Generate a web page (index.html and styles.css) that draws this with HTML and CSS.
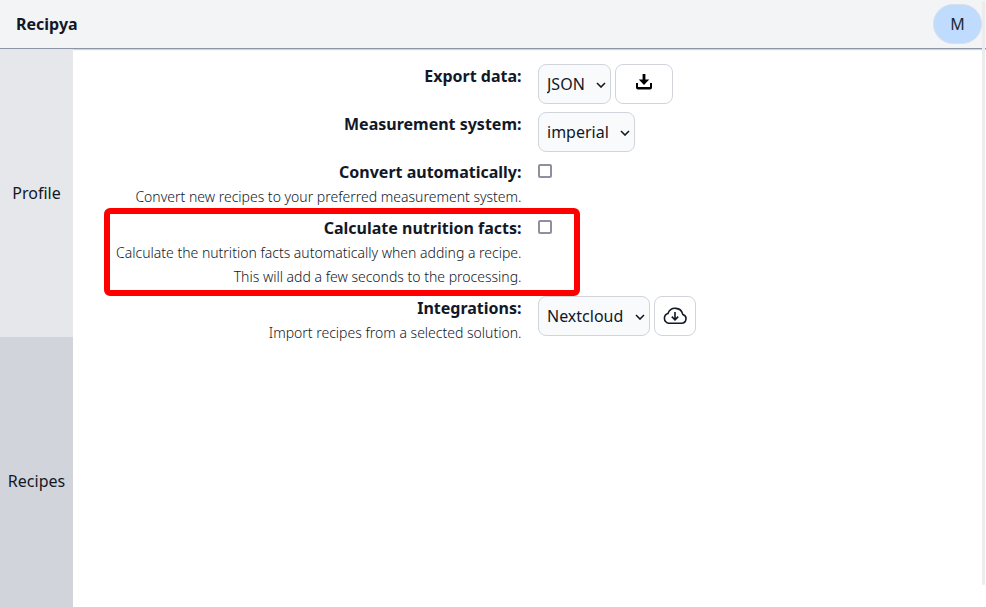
FILE: index.html
```html
<!DOCTYPE html>
<html lang="en">
<head>
<meta charset="utf-8">
<title>Recipya</title>
<link rel="stylesheet" href="styles.css">
</head>
<body>
<header class="topbar"><a class="brand">Recipya</a><button class="avatar">M</button></header>
<div class="shell">
  <nav class="tabs"><a class="tab">Profile</a><a class="tab selected">Recipes</a></nav>
  <main class="settings">
    <div class="row export">
      <div class="label"><b>Export data:</b></div>
      <div class="controls">
        <div class="select w-json"><select><option>JSON</option></select><svg class="chevron" viewBox="0 0 10 6"><path d="M1 1l4 4 4-4"/></svg></div>
        <button class="button wide" aria-label="Export"><svg class="download" viewBox="0 0 16 16"><path d="M6.6 0h2.8v5.5h3.8L8 11 2.800 5.500h3.800zM0 9h2v4h12V9h2v4.500q0 1.900-2 1.900H2q-2 0-2-1.900z"/></svg></button>
      </div>
    </div>
    <div class="row measure">
      <div class="label"><b>Measurement system:</b></div>
      <div class="controls"><div class="select w-imperial"><select><option>imperial</option></select><svg class="chevron" viewBox="0 0 10 6"><path d="M1 1l4 4 4-4"/></svg></div></div>
    </div>
    <div class="row convert">
      <div class="label"><b>Convert automatically:</b><small>Convert new recipes to your preferred measurement system.</small></div>
      <div class="controls"><input class="check" type="checkbox"></div>
    </div>
    <div class="row nutrition">
      <div class="label"><b>Calculate nutrition facts:</b><small>Calculate the nutrition facts automatically when adding a recipe.</small><small>This will add a few seconds to the processing.</small></div>
      <div class="controls"><input class="check" type="checkbox"></div>
      <svg class="highlight" viewBox="0 0 476 88"><rect x="3" y="3" width="470" height="82" rx="3"/></svg>
    </div>
    <div class="row">
      <div class="label"><b>Integrations:</b><small>Import recipes from a selected solution.</small></div>
      <div class="controls">
        <div class="select w-cloud"><select><option>Nextcloud</option></select><svg class="chevron" viewBox="0 0 10 6"><path d="M1 1l4 4 4-4"/></svg></div>
        <button class="button" aria-label="Import"><svg class="cloud" viewBox="0 0 24 18"><path d="M5.500 16.200h13a4.500 4.500 0 0 0 1.300-8.800A7.700 7.700 0 0 0 5 6.500 5 5 0 0 0 5.500 16.200zM12 5v7.600M8.800 9.600l3.200 3.200 3.200-3.200"/></svg></button>
      </div>
    </div>
  </main>
</div>
<div class="scrollbar"></div>
</body>
</html>
```
FILE: styles.css
```css
* { box-sizing: border-box; }
body { margin: 0; height: 607px; overflow: hidden; background: #fff; color: #111827; font: 16px/24px "Noto Sans", sans-serif; }
button, select { font: inherit; color: inherit; }
.topbar { height: 49px; display: flex; align-items: center; justify-content: space-between; padding: 0 4px 1px 16px; background: #f3f4f6; border-bottom: 1px solid #8b95a3; box-shadow: 0 1px 1px #d1d5db; position: relative; }
.brand { font-weight: 700; }
.avatar { width: 49px; height: 40px; padding: 0; border: 1px solid #d8e0ea; border-radius: 20px; background: #bfdbfe; color: #1f2937; }
.shell { display: flex; height: 558px; position: relative; }
.tabs { width: 73px; flex: none; }
.tab { display: flex; align-items: center; justify-content: center; height: 288px; background: #e5e7eb; }
.tab.selected { background: #d1d5db; }
.settings { flex: 1; padding-top: 15px; }
.row { display: grid; grid-template-columns: 448.5px 1fr; column-gap: 16.5px; position: relative; }
.export, .measure { height: 48px; }
.convert { height: 56px; }
.nutrition { height: 80px; }
.label { text-align: right; }
.label b, .label small { display: block; white-space: nowrap; }
.label small { font-size: 14px; font-weight: 300; line-height: 24px; }
.label b + small { margin-top: 1px; }
.controls { display: flex; gap: 4px; align-items: flex-start; }
.select { position: relative; height: 40px; }
.select select { appearance: none; width: 100%; height: 40px; margin: 0; padding: 0 8px; border: 1px solid #d1d5db; border-radius: 8px; background: #f9fafb; }
.w-json { width: 73px; }
.w-imperial { width: 97px; }
.w-cloud { width: 112px; }
.chevron { position: absolute; right: 5px; top: 17.5px; width: 10px; height: 6px; fill: none; stroke: #111827; stroke-width: 1.6; }
.button { display: flex; align-items: center; justify-content: center; width: 42px; height: 40px; padding: 0; border: 1px solid #d1d5db; border-radius: 8px; background: #fff; }
.wide { width: 58px; }
.download { width: 16px; height: 16px; margin: 0 1px 4px 0; }
.cloud { width: 24px; height: 18px; margin-bottom: 1px; fill: none; stroke: #111827; stroke-width: 1.6; }
.check { appearance: none; width: 14px; height: 14px; margin: 0; border: 2px solid #8f8f9d; border-radius: 2px; background: #fff; }
.convert .check, .nutrition .check { margin-top: 4px; }
.highlight { position: absolute; left: 31px; top: -8px; width: 476px; height: 88px; fill: none; stroke: #f00; stroke-width: 6; }
.scrollbar { position: absolute; right: 1px; top: 1px; width: 3px; height: 584px; background: #ececee; border-radius: 2px; }
```
